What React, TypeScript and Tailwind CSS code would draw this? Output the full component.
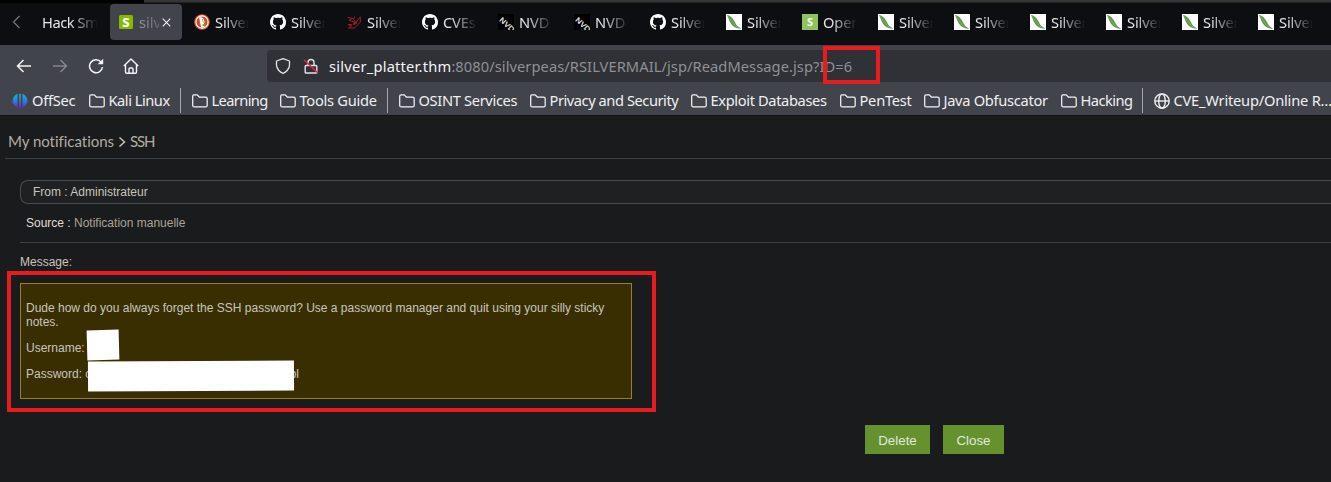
import React from "react";

type TabKind = "duck" | "github" | "dragon" | "nvd" | "feather" | "spring";

const tabs: { icon: TabKind; label: string }[] = [
  { icon: "duck", label: "Silver" },
  { icon: "github", label: "Silver" },
  { icon: "dragon", label: "Silver" },
  { icon: "github", label: "CVEs" },
  { icon: "nvd", label: "NVD" },
  { icon: "nvd", label: "NVD" },
  { icon: "github", label: "Silver" },
  { icon: "feather", label: "Silver" },
  { icon: "spring", label: "Open" },
  { icon: "feather", label: "Silver" },
  { icon: "feather", label: "Silver" },
  { icon: "feather", label: "Silver" },
  { icon: "feather", label: "Silver" },
  { icon: "feather", label: "Silver" },
  { icon: "feather", label: "Silver" },
];

function TabIcon({ kind }: { kind: TabKind }) {
  if (kind === "duck")
    return (
      <svg viewBox="0 0 16 16" className="size-4 shrink-0">
        <circle cx="8" cy="8" r="7.8" fill="#de5833" />
        <circle cx="8" cy="8" r="6.1" fill="#d8492c" stroke="#fff" strokeWidth="1.1" />
        <path d="M5.2 3.6c2-.9 4.8.1 5 3.1l-.2 2.1.5 4.2-3.2.7L6 8.2z" fill="#fff" />
        <path d="M8.4 7.4h3.2c.6.6-.6 1.5-2.8 1.6z" fill="#fdbd26" />
        <path d="m8.3 10.2 2.8-.4.1 2.5-2.6-.5z" fill="#55b746" />
        <circle cx="8.7" cy="5.9" r=".55" fill="#2d4f8e" />
      </svg>
    );
  if (kind === "github")
    return (
      <svg viewBox="0 0 16 16" className="size-4 shrink-0" fill="#fff">
        <path d="M8 0C3.58 0 0 3.58 0 8c0 3.54 2.29 6.53 5.47 7.59.4.07.55-.17.55-.38 0-.19-.01-.82-.01-1.49-2.01.37-2.53-.49-2.69-.94-.09-.23-.48-.94-.82-1.13-.28-.15-.68-.52-.01-.53.63-.01 1.08.58 1.23.82.72 1.21 1.87.87 2.33.66.07-.52.28-.87.51-1.07-1.78-.2-3.64-.89-3.64-3.95 0-.87.31-1.59.82-2.15-.08-.2-.36-1.02.08-2.12 0 0 .67-.21 2.2.82.64-.18 1.32-.27 2-.27s1.36.09 2 .27c1.53-1.04 2.2-.82 2.2-.82.44 1.1.16 1.92.08 2.12.51.56.82 1.27.82 2.15 0 3.07-1.87 3.75-3.65 3.95.29.25.54.73.54 1.48 0 1.07-.01 1.93-.01 2.2 0 .21.15.46.55.38A8.01 8.01 0 0 0 16 8c0-4.42-3.58-8-8-8z" />
      </svg>
    );
  if (kind === "dragon")
    return (
      <svg viewBox="0 0 16 16" className="size-4 shrink-0" fill="none" stroke="#9b1f24" strokeWidth="1">
        <path d="M1.500 3.500 6.500 4.300 3 6.500l5 1.200M8.500 2.500l-.8 3.200 2.600 2.500 3.900-5.400.3 5.400-3.500 3.300-2.500 2.500H2.500L5.500 12 2 10.500l4.500.200" />
        <path d="m8 8 3 .5-3 2.500z" fill="#9b1f24" />
      </svg>
    );
  if (kind === "nvd")
    return (
      <svg viewBox="0 0 16 16" className="size-4 shrink-0 bg-black">
        <g transform="translate(6.200 10.300) rotate(43)">
          <text textAnchor="middle" x="2.300" y="1" fontFamily="Liberation Sans, sans-serif" fontWeight="700" fontSize="7.500" textLength="18" lengthAdjust="spacingAndGlyphs" fill="#dedede">NVD</text>
        </g>
      </svg>
    );
  if (kind === "spring")
    return (
      <svg viewBox="0 0 16 16" className="size-4 shrink-0">
        <path d="M0 0h16v16H0z" fill="#8fc35f" />
        <text x="8" y="12" textAnchor="middle" fontFamily="Noto Sans, sans-serif" fontWeight="700" fontSize="11" fill="#f2fbe9">S</text>
      </svg>
    );
  return (
    <svg viewBox="0 0 16 16" className="size-4 shrink-0">
      <path d="M0 0h16v16H0z" fill="#fff" />
      <path d="M.8.7C4.800 1.700 6.300 3.500 8 6.500c1.800 3.300 2.900 5.700 7.200 8.200C10.500 15 7.200 13 5 9.800 3.200 7 2.400 3.500.8.7z" fill="#62984f" />
      <path d="M1.200 1.200C5.500 5 6.500 12 14.500 14.500" fill="none" stroke="#93b985" strokeWidth=".500" />
    </svg>
  );
}

function Folder() {
  return (
    <svg viewBox="0 0 16 14" className="h-[14px] w-4 shrink-0" fill="none" stroke="#f4f4f6" strokeWidth="1.25" strokeLinejoin="round">
      <path d="M.7 2.300Q.7.900 2 .900H5.300L7.500 3.200H13.600Q15.200 3.200 15.200 4.700V11.400Q15.200 12.900 13.700 12.900H2.200Q.7 12.900.7 11.400Z" />
    </svg>
  );
}

function Bookmark({ label, size }: { label: string; size: string }) {
  return (
    <div className={`flex shrink-0 items-center gap-[3.5px] ${size}`}>
      <Folder />
      <span className="-mt-px">{label}</span>
    </div>
  );
}

function Separator() {
  return <div className="mr-[11px] h-[25px] w-px shrink-0 bg-[#a5a6aa]" />;
}

function TabStrip() {
  return (
    <div className="flex h-[42px] items-start bg-[#0d0e12] text-[#e4e4e6]">
      <div className="flex h-[38px] w-[42px] shrink-0 items-center pl-3">
        <svg viewBox="0 0 9 14" className="h-[14px] w-[9px]" fill="none" stroke="#77787d" strokeWidth="1.200"><path d="M7.500 1 1.500 7l6 6" /></svg>
      </div>
      <div className="flex h-[38px] w-[68px] shrink-0 items-center">
        <span className="w-[56px] tracking-[-0.450px] [mask-image:linear-gradient(to_right,#000_50%,transparent_100%)]">Hack Sm</span>
      </div>
      <div className="mt-px flex h-9 w-[72px] shrink-0 items-center rounded bg-[#42444c] pl-[9px]">
        <svg viewBox="0 0 14 14" className="size-[14px] shrink-0">
          <rect width="14" height="14" rx="1.500" fill="#86b900" />
          <text x="7" y="11.600" textAnchor="middle" fontFamily="Noto Sans, sans-serif" fontWeight="800" fontSize="13" fill="#fff">S</text>
        </svg>
        <span className="ml-1.5 w-[20px] overflow-hidden opacity-75 [mask-image:linear-gradient(to_right,#000a_0%,#0004_100%)]">silv</span>
        <svg viewBox="0 0 10 10" className="ml-[3px] size-[9px] shrink-0" stroke="#f1f1f3" strokeWidth="1.200"><path d="m.8.8 8.400 8.400M9.200.8.8 9.200" /></svg>
      </div>
      <div className="flex h-[38px] pl-[12px]">
        {tabs.map((t, i) => (
          <div key={i} className="flex w-[76px] shrink-0 items-center gap-[5px]">
            <TabIcon kind={t.icon} />
            <span className="w-[34px] overflow-hidden tracking-[-0.150px] [mask-image:linear-gradient(to_right,#000_25%,transparent_100%)]">{t.label}</span>
          </div>
        ))}
      </div>
    </div>
  );
}

function Toolbar() {
  return (
    <div className="flex h-[41px] items-center bg-[#42444c]">
      <div className="flex w-[267px] shrink-0 items-center pl-4">
        <svg viewBox="0 0 16 16" className="size-4" fill="none" stroke="#f4f4f6" strokeWidth="1.500"><path d="M15 8H1.500M7.500 2l-6 6 6 6" /></svg>
        <svg viewBox="0 0 16 16" className="ml-5 size-4" fill="none" stroke="#85868c" strokeWidth="1.500"><path d="M1 8h13.500M8.500 2l6 6-6 6" /></svg>
        <svg viewBox="0 0 16 16" className="ml-5 size-4" fill="none" stroke="#f4f4f6" strokeWidth="1.500"><path d="M13 4A6.500 6.500 0 1 0 14.500 9" /><path d="M15.200.8v5.500H9.700z" fill="#f4f4f6" stroke="none" /></svg>
        <svg viewBox="0 0 16 16" className="ml-[19px] size-4" fill="none" stroke="#f4f4f6" strokeWidth="1.400" strokeLinejoin="round"><path d="M.8 8 8 1l7.200 7M2.500 6.700V14q0 1.200 1.200 1.200h8.600q1.200 0 1.200-1.200V6.700M6 15v-4q0-1 1-1h2q1 0 1 1v4" /></svg>
      </div>
      <div className="relative mt-px flex h-8 flex-1 items-center rounded-l bg-[#303136] pl-2 text-[#8f9095]">
        <svg viewBox="0 0 16 16" className="size-4 shrink-0" fill="none" stroke="#e3e3e5" strokeWidth="1.300" strokeLinejoin="round"><path d="M8 .7 14.500 3v4c0 4-3.500 7.300-6.500 8.300C5 14.300 1.500 11 1.500 7V3z" /></svg>
        <svg viewBox="0 0 16 16" className="ml-3 size-4 shrink-0" fill="none"><path d="M5 7V4.500a3 3 0 0 1 6 0V7M3 7.500h10q.8 0 .8.8v5.900q0 .8-.8.8H3q-.8 0-.8-.8V8.300q0-.8.8-.8z" stroke="#e3e3e5" strokeWidth="1.400" /><path d="m1 2 14 13" stroke="#e22850" strokeWidth="1.400" /></svg>
        <span className="ml-[10px] whitespace-nowrap text-[14.670px] tracking-[0.060px]"><span className="tracking-[0.220px] text-[#f4f4f6]">silver_platter.thm</span><span className="tracking-[0.070px]">:8080/silverpeas/RSILVERMAIL/jsp/ReadMessage.jsp?ID=6</span></span>
        <div className="absolute top-[-4px] left-[556px] h-[38px] w-[57px] border-4 border-[#e81b1d]" />
      </div>
    </div>
  );
}

function BookmarksBar() {
  return (
    <div className="flex h-[30px] items-center border-b border-[#101114] bg-[#42444c] pl-3 text-[#f0f0f2]">
      <div className="flex w-[77px] shrink-0 items-center gap-1">
        <svg viewBox="0 0 16 16" className="size-4 shrink-0">
          <defs><linearGradient id="offsec" x1="0" x2="0" y1="0" y2="1"><stop stopColor="#15b9d5" /><stop offset=".55" stopColor="#3472d6" /><stop offset="1" stopColor="#7b17d4" /></linearGradient></defs>
          <path d="M5.500.800v13.500C2.500 13 .5 11 .5 8S2.500 2 5.500.800zm5 0v13.500c3-1.300 5-3.300 5-6.300S13.500 2 10.500.800zM7.200.8h1.600v15H7.200z" fill="url(#offsec)" />
        </svg>
        <span className="-mt-px tracking-[-0.250px]">OffSec</span>
      </div>
      <Bookmark label="Kali Linux" size="w-[91px] tracking-[-0.480px]" />
      <Separator />
      <Bookmark label="Learning" size="w-[88px] tracking-[-0.620px]" />
      <Bookmark label="Tools Guide" size="w-[107px] tracking-[-0.270px]" />
      <Separator />
      <Bookmark label="OSINT Services" size="w-[131px] tracking-[-0.340px]" />
      <Bookmark label="Privacy and Security" size="w-[161px] tracking-[-0.450px]" />
      <Bookmark label="Exploit Databases" size="w-[149px] tracking-[-0.370px]" />
      <Bookmark label="PenTest" size="w-[84px] tracking-[-0.250px]" />
      <Bookmark label="Java Obfuscator" size="w-[137px] tracking-[-0.300px]" />
      <Bookmark label="Hacking" size="w-[81px] tracking-[-0.560px]" />
      <Separator />
      <div className="flex shrink-0 items-center gap-[3.500px]">
        <svg viewBox="0 0 16 16" className="size-4" fill="none" stroke="#f4f4f6" strokeWidth="1.350"><circle cx="8" cy="8" r="7.200" /><ellipse cx="8" cy="8" rx="3.300" ry="7.200" /><path d="M1 8h14" /></svg>
        <span className="-mt-px tracking-[-0.220px]">CVE_Writeup/Online R…</span>
      </div>
    </div>
  );
}

function MessagePage() {
  return (
    <main className="h-[366px] overflow-hidden bg-[#1a1b1d] pt-px font-['Liberation_Sans',Arial,sans-serif] text-[12px] leading-[14px] text-[#c9c5bd]">
      <div className="ml-[5px] flex h-[42px] border-b border-[#3e4143] pt-[14px] pl-[3px] font-['Lato',sans-serif] text-[15px] leading-5 text-[#b3aca1]">
        <span className="w-[110px] tracking-[-0.020px]">My notifications</span>
        <svg viewBox="0 0 8 12" className="mt-[5px] h-3 w-2" fill="none" stroke="#c8c3ba" strokeWidth="1.500"><path d="m1.500 1.500 5 4.500-5 4.500" /></svg>
        <span className="ml-1 tracking-[-1.100px]">SSH</span>
      </div>
      <div className="ml-5 pt-[21px]">
        <div className="flex h-6 items-center rounded-l-lg border border-r-0 border-[#484c4e] bg-[#1e2021] pl-3">From : Administrateur</div>
        <div className="h-[39px] border-b border-[#3e4143] pt-3 pl-1.5 text-[#aaa398]"><span className="text-[#e0ddd8]">Source : </span>Notification manuelle</div>
        <div className="pt-3">Message:</div>
        <div className="relative mt-[14px] h-[116px] w-[612px] border border-[#9b8212] bg-[#382e02] pt-[17px] pr-1 pl-[5px]">
          <p>Dude how do you always forget the SSH password? Use a password manager and quit using your silly sticky notes.</p>
          <p className="mt-3">Username:</p>
          <p className="mt-3 flex w-[273px] justify-between"><span>Password: c</span><span>ol</span></p>
          <div className="absolute top-[45.500px] left-[66px] h-[30px] w-8 rotate-[-1.500deg] bg-white" />
          <div className="absolute top-[76.500px] left-[67px] h-[30px] w-[206px] rotate-[-0.300deg] bg-white" />
          <div className="absolute top-[-13px] left-[-14px] h-[141px] w-[649px] border-4 border-[#e81b1d]" />
        </div>
      </div>
      <div className="mt-[26px] ml-[865px] flex gap-[13px] text-[13.330px] text-[#e3e8dc]">
        <button className="h-[29px] w-[65px] bg-[#65922f] pt-0.5">Delete</button>
        <button className="h-[29px] w-[61px] bg-[#65922f] pt-0.5">Close</button>
      </div>
    </main>
  );
}

export default function App() {
  return (
    <div className="h-[482px] w-[1331px] overflow-hidden bg-[#1a1b1d] font-['Noto_Sans',sans-serif] text-[14.670px] leading-5 whitespace-nowrap">
      <div className="flex h-[3px]">
        <div className="w-36 bg-black" />
        <div className="flex-1 border-b border-[#222225] bg-[#353535]" />
      </div>
      <TabStrip />
      <Toolbar />
      <BookmarksBar />
      <div className="whitespace-normal"><MessagePage /></div>
    </div>
  );
}
